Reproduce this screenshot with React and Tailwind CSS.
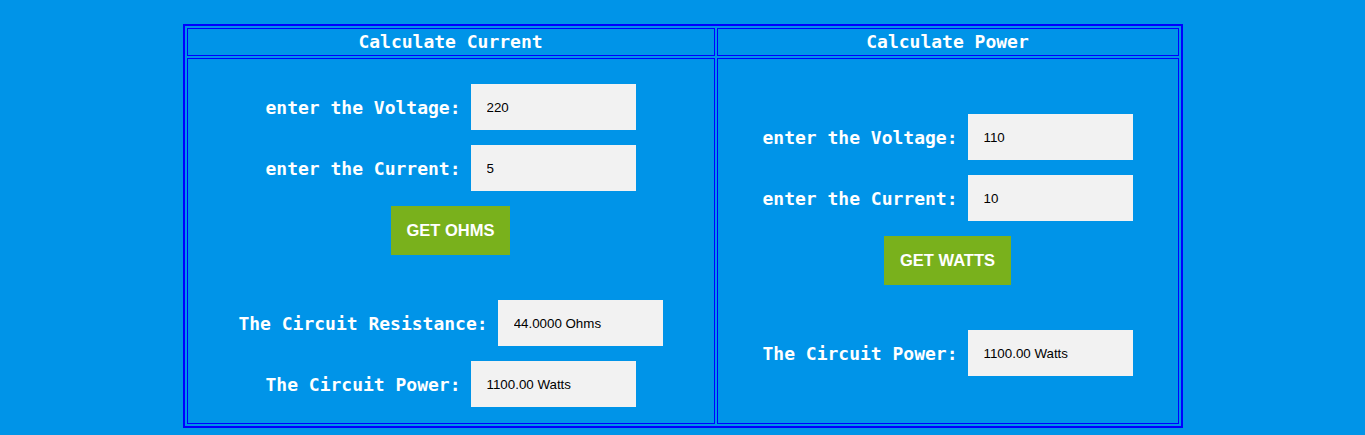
import React from 'react';

const mono = { fontFamily: '"DejaVu Sans Mono", "Liberation Mono", monospace' };

const Field = ({ label, value, last }) => (
  <div className={`flex items-center justify-center ${last ? '' : 'mb-[15px]'}`}>
    <label className="text-[18px] font-bold text-white mr-[10px] whitespace-pre" style={mono}>
      {label}
    </label>
    <input
      readOnly
      value={value}
      className="w-[165px] h-[46px] bg-[#f2f2f2] px-[16px] text-[13.33px] text-black outline-none font-['Liberation_Sans',Arial,sans-serif]"
    />
  </div>
);

const ActionButton = ({ children }) => (
  <div className="flex justify-center mb-[45px]">
    <button className="h-[49px] w-auto px-[15.5px] bg-[#79b11c] text-white text-[16.5px] font-bold uppercase font-['Liberation_Sans',Arial,sans-serif]">
      {children}
    </button>
  </div>
);

const HeaderCell = ({ children }) => (
  <div
    className="border border-[#0000ff] h-[28px] leading-[26px] text-center text-[18px] font-bold text-white"
    style={mono}
  >
    {children}
  </div>
);

export default function App() {
  return (
    <div className="min-h-[435px] bg-[#0094e8] pt-[24px]">
      <div className="mx-auto w-[1000px] border-2 border-[#0000ff] p-[2px]">
        <div className="grid grid-cols-[528px_462px] gap-[2px]">
          <HeaderCell>Calculate Current</HeaderCell>
          <HeaderCell>Calculate Power</HeaderCell>

          {/* current / resistance */}
          <div className="border border-[#0000ff] pt-[25px] pb-[16px] flex flex-col justify-center">
            <Field label="enter the Voltage:" value="220" />
            <Field label="enter the Current:" value="5" />
            <ActionButton>Get Ohms</ActionButton>
            <Field label="The Circuit Resistance:" value="44.0000 Ohms" />
            <Field label="The Circuit Power:" value="1100.00 Watts" last />
          </div>

          {/* power */}
          <div className="border border-[#0000ff] flex flex-col justify-center">
            <div className="pt-[8px]">
              <Field label="enter the Voltage:" value="110" />
              <Field label="enter the Current:" value="10" />
              <ActionButton>Get Watts</ActionButton>
              <Field label="The Circuit Power:" value="1100.00 Watts" last />
            </div>
          </div>
        </div>
      </div>
    </div>
  );
}
